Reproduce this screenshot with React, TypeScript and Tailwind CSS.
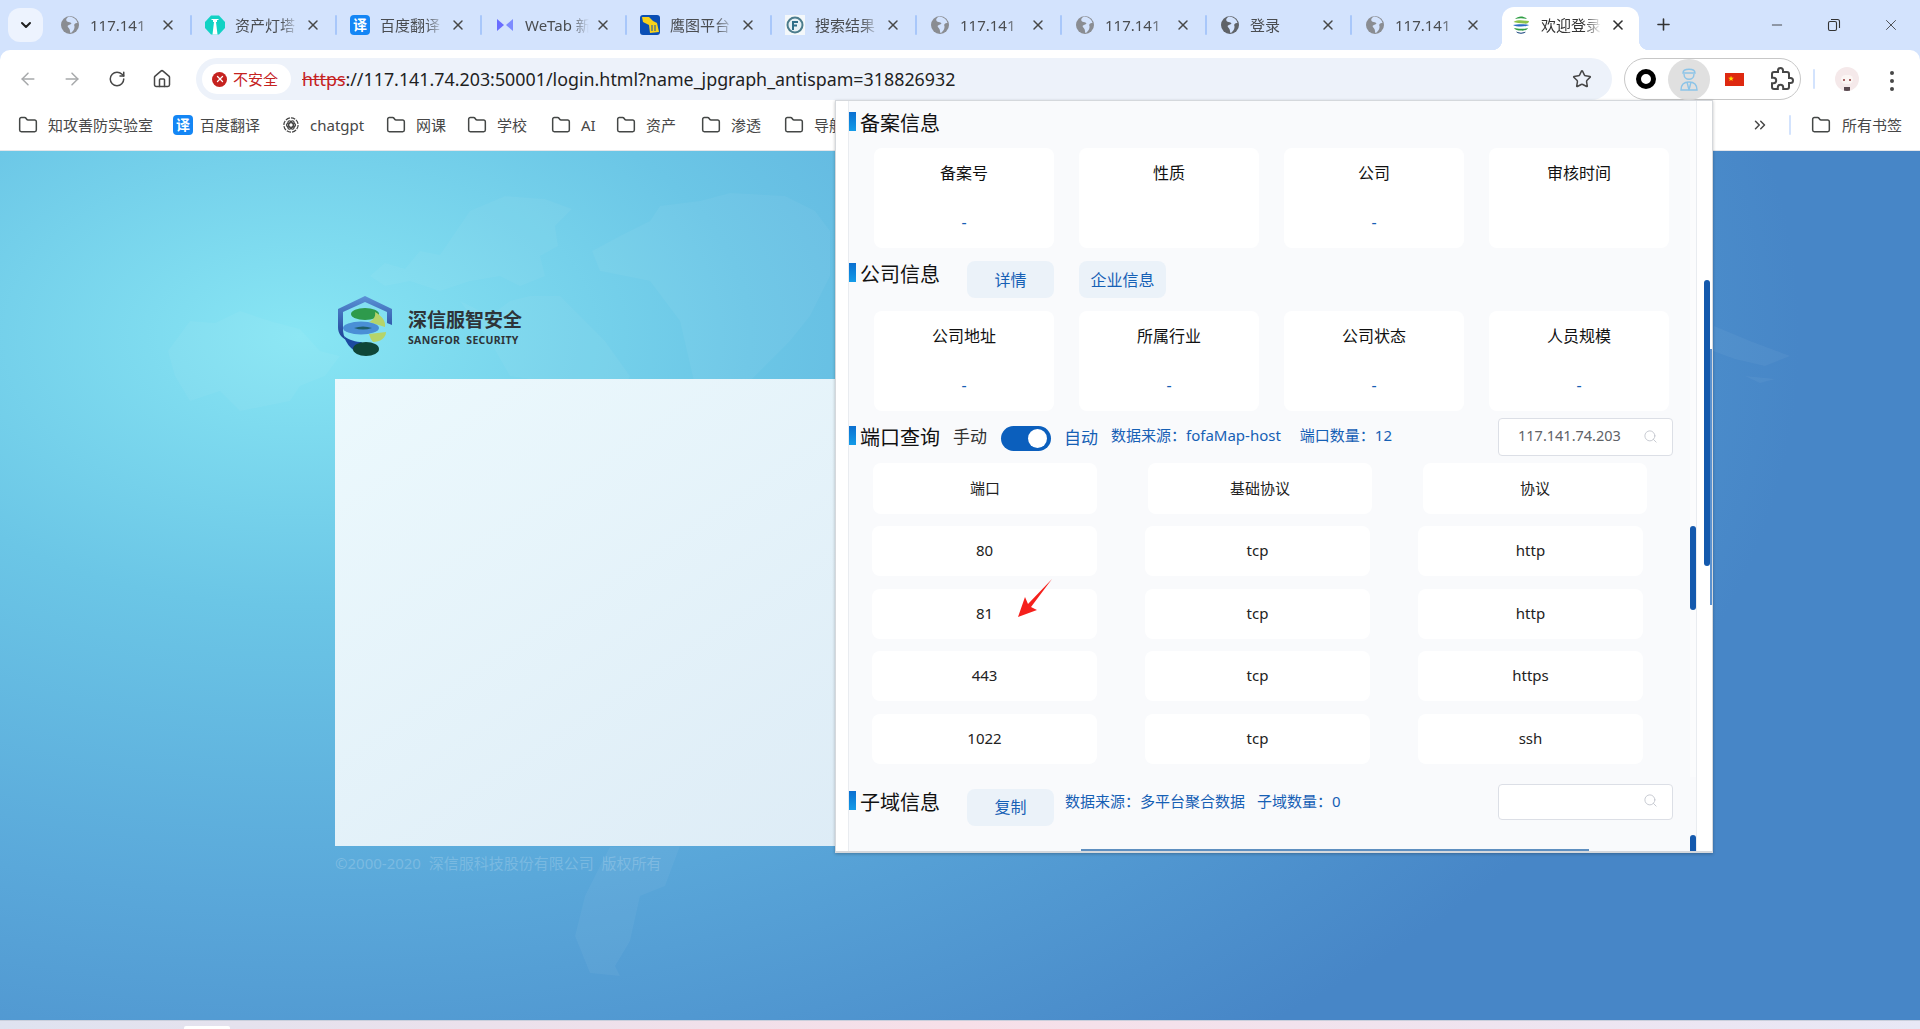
import React from "react";
import { ArrowLeft, ArrowRight, RotateCw, House, Star, Folder, X, Plus, Minus, Search, ChevronDown, ChevronsRight } from "lucide-react";

const GlobeIcon = ({ dark }: { dark?: boolean }) => (
  <svg width="20" height="20" viewBox="0 0 20 20">
    <circle cx="10" cy="10" r="9" fill={dark ? "#5f6368" : "#8a8d92"} />
    <path d="M9 1.5 C6 3 5.5 5 7 6.5 C9 7.5 11 7 11.5 8.5 C10.5 10 8.5 9.5 7.5 11 C8 13 10 13.5 10 16 C10 17.5 10.5 18 11 18 C13 16 15 14 14.5 11 C13.5 9.5 15 8 17.5 8 C17 5 14 2 9 1.5Z" fill="#d3e3fd" />
  </svg>
);
const TowerIcon = () => (
  <svg width="20" height="20" viewBox="0 0 20 20">
    <path d="M6 0.5 H14 L20 7 V13 L14 19.5 H6 L0 13 V7Z" fill="#12d2c4" />
    <path d="M8 5 H12 V7 H11 L12.5 19.5 H7.5 L9 7 H8Z M6.5 4 H13.5 V5 H6.5Z" fill="#ffffff" />
  </svg>
);
const TranslateIcon = ({ size = 20 }: { size?: number }) => (
  <span className="flex shrink-0 items-center justify-center rounded-[4px] bg-[#1486f5] text-[14px] leading-none font-bold text-white" style={{ width: size, height: size }}>译</span>
);
const WeTabIcon = () => (
  <svg width="20" height="20" viewBox="0 0 20 20">
    <path d="M2 4 L9 10 L2 16Z" fill="#6a6cff" />
    <path d="M18 4 L11 10 L18 16Z" fill="#7d8bff" />
  </svg>
);
const HunterIcon = () => (
  <svg width="20" height="20" viewBox="0 0 20 20">
    <rect width="20" height="20" rx="3" fill="#0a4fb5" />
    <path d="M2 2 H9 L13 6 L17 8 L19 17 L10 18 L9 10 L3 7Z" fill="#f7d21b" />
    <path d="M12 10 V16 M15 10 V16" stroke="#0a4fb5" strokeWidth="1" />
  </svg>
);
const FofaIcon = () => (
  <svg width="20" height="20" viewBox="0 0 20 20">
    <rect width="20" height="20" fill="#f4f8fa" />
    <circle cx="10" cy="10" r="7.5" fill="#e6f1f5" stroke="#4b7c8c" strokeWidth="2" />
    <path d="M8 15 V7 H13 M8 10.5 H12" fill="none" stroke="#2f6f88" strokeWidth="2" />
  </svg>
);
const SangforGlobe = ({ w }: { w: number }) => (
  <svg width={w} height={w} viewBox="0 0 20 20">
    <path d="M4 4 C7 0.5 13 0.5 16 4 C12 3 8 3 4 4Z" fill="#2f9e44" />
    <path d="M2.5 7 C8 4 13 6 18 6 C18 8 16 9 13 8.5 C9 8 5 8 2.5 7Z" fill="#8bc34a" />
    <path d="M2 10 C6 9 14 9 18 10 C15 12 5 12 2 10Z" fill="#2b6cc4" />
    <path d="M3 13 C7 14 13 14 17 13 C16 15 13 16 10 15.5 C7 15.5 4 15 3 13Z" fill="#2f9e44" />
    <path d="M5 16.5 C8 18 12 18 15 16.5 C13 19.5 7 19.5 5 16.5Z" fill="#123f7a" />
  </svg>
);
const SmallChatIcon = () => (
  <svg width="18" height="18" viewBox="0 0 24 24" fill="none" stroke="#444" strokeWidth="1.6">
    <circle cx="12" cy="12" r="9.5" strokeDasharray="6 1.4" />
    <ellipse cx="12" cy="12" rx="6" ry="3" />
    <ellipse cx="12" cy="12" rx="6" ry="3" transform="rotate(60 12 12)" />
    <ellipse cx="12" cy="12" rx="6" ry="3" transform="rotate(120 12 12)" />
  </svg>
);

type TabData = { title: string; icon: React.ReactNode };
const tabs: TabData[] = [
  { title: "117.141", icon: <GlobeIcon /> },
  { title: "资产灯塔", icon: <TowerIcon /> },
  { title: "百度翻译", icon: <TranslateIcon /> },
  { title: "WeTab 新", icon: <WeTabIcon /> },
  { title: "鹰图平台", icon: <HunterIcon /> },
  { title: "搜索结果", icon: <FofaIcon /> },
  { title: "117.141", icon: <GlobeIcon /> },
  { title: "117.141", icon: <GlobeIcon /> },
  { title: "登录", icon: <GlobeIcon dark /> },
  { title: "117.141", icon: <GlobeIcon /> },
];

const Tab = ({ tab, last }: { tab: TabData; last: boolean }) => (
  <div className="relative flex h-[50px] w-[145px] shrink-0 items-center pl-[13px]">
    <span className="flex h-5 w-5 shrink-0 items-center justify-center">{tab.icon}</span>
    <span className="ml-[10px] w-[64px] text-[15px] whitespace-nowrap text-[#4a4d51] [mask-image:linear-gradient(90deg,#000_72%,transparent_100%)]">{tab.title}</span>
    <X size={16} strokeWidth={2.2} className="ml-[6px] shrink-0 text-[#474747]" />
    {!last && <span className="absolute right-0 top-[15px] h-[20px] w-[2px] rounded bg-[#a8c7fa]" />}
  </div>
);

const FolderMark = ({ label, width }: { label: string; width: number }) => (
  <div className="flex shrink-0 items-center" style={{ width }}>
    <Folder size={20} strokeWidth={1.8} className="shrink-0 text-[#444746]" />
    <span className="ml-[10px] text-[15px] whitespace-nowrap text-[#474747]">{label}</span>
  </div>
);

const Card = ({ label, value }: { label: string; value?: string }) => (
  <div className="flex h-[100px] w-[180px] flex-col items-center rounded-[8px] bg-white pt-[13px]">
    <span className="h-[24px] text-[16px] leading-[24px] text-[#111]">{label}</span>
    <span className="mt-[25px] h-[24px] text-[16px] leading-[24px] text-[#1660b5]">{value ?? ""}</span>
  </div>
);

const SectionTitle = ({ text }: { text: string }) => (
  <div className="flex shrink-0 items-start">
    <span className="h-[19px] w-[7px] bg-gradient-to-b from-[#0c6fd0] to-[#149be8]" />
    <span className="ml-[4px] -mt-[1px] text-[20px] leading-[26px] whitespace-nowrap text-[#111]">{text}</span>
  </div>
);

const SoftButton = ({ text }: { text: string }) => (
  <div className="flex h-[37px] w-[87px] items-center justify-center rounded-[8px] bg-[#ebf2f9] text-[16px] text-[#1660b5]">{text}</div>
);

const SearchBox = ({ value, tall }: { value?: string; tall?: boolean }) => (
  <div className={`absolute left-[649px] flex w-[175px] items-center justify-between rounded-[4px] border border-[#dcdfe6] bg-white pb-[2px] pl-[19px] pr-[14px] text-[14.5px] text-[#606266] ${tall ? "top-[7px] h-[38px]" : "top-[20px] h-[36px]"}`}>
    <span>{value ?? ""}</span>
    <Search size={15} strokeWidth={1.4} className="text-[#c0c4cc]" />
  </div>
);

const ports = [
  ["80", "tcp", "http"],
  ["81", "tcp", "http"],
  ["443", "tcp", "https"],
  ["1022", "tcp", "ssh"],
];

export default function App() {
  return (
    <div className="relative flex h-[1029px] w-[1920px] flex-col overflow-hidden bg-[#d3e3fd] font-['Noto_Sans','Noto_Sans_CJK_SC',sans-serif]">
      {/* Tab strip */}
      <div className="flex h-[50px] shrink-0 items-center pl-[8px]">
        <div className="flex h-[34px] w-[35px] shrink-0 items-center justify-center rounded-[12px] bg-[#edf3fe]">
          <ChevronDown size={16} strokeWidth={3} className="text-[#1f1f1f]" />
        </div>
        <div className="ml-[4px] flex">
          {tabs.map((t, i) => (
            <Tab key={i} tab={t} last={i === tabs.length - 1} />
          ))}
          <div className="relative ml-[5px] mt-[7px] flex h-[43px] w-[137px] shrink-0 items-center rounded-t-[12px] bg-white pb-[7px] pl-[9px]">
            <span className="absolute -left-[10px] bottom-0 h-[10px] w-[10px] bg-[radial-gradient(circle_at_0_0,transparent_10px,white_10.5px)]" />
            <span className="absolute -right-[10px] bottom-0 h-[10px] w-[10px] bg-[radial-gradient(circle_at_100%_0,transparent_10px,white_10.5px)]" />
            <SangforGlobe w={20} />
            <span className="ml-[10px] w-[60px] text-[15px] whitespace-nowrap text-[#333] [mask-image:linear-gradient(90deg,#000_72%,transparent_100%)]">欢迎登录</span>
            <X size={16} strokeWidth={2.4} className="ml-[9px] shrink-0 text-[#303030]" />
          </div>
          <Plus size={19} strokeWidth={2} className="ml-[15px] mt-[15px] shrink-0 text-[#333]" />
        </div>
        <div className="ml-auto flex items-center pr-[20px]">
          <Minus size={16} strokeWidth={1.3} className="text-[#333]" />
          <svg width="14" height="14" viewBox="0 0 14 14" fill="none" stroke="#333" strokeWidth="1.1" className="ml-[42px]">
            <rect x="1.5" y="3.5" width="8" height="9" rx="1.5" />
            <path d="M4 1.5 H10.5 A2 2 0 0 1 12.5 3.5 V10" />
          </svg>
          <X size={18} strokeWidth={1.1} className="ml-[41px] text-[#333]" />
        </div>
      </div>

      {/* Toolbar */}
      <div className="flex h-[50px] shrink-0 items-start rounded-t-[10px] bg-white pt-[8px]">
        <div className="flex h-[42px] items-center pl-[18px]">
          <ArrowLeft size={20} strokeWidth={1.8} className="text-[#a7a9ab]" />
          <ArrowRight size={20} strokeWidth={1.8} className="ml-[24px] text-[#a7a9ab]" />
          <RotateCw size={18} strokeWidth={2} className="ml-[26px] text-[#474747]" />
          <House size={20} strokeWidth={1.8} className="ml-[26px] text-[#474747]" />
        </div>
        <div className="ml-[24px] flex h-[42px] w-[1416px] items-center rounded-full bg-[#edf2fa] pl-[6px] pr-[20px]">
          <div className="flex h-[30px] w-[89px] items-center rounded-full bg-white pl-[10px]">
            <span className="flex h-[15px] w-[15px] items-center justify-center rounded-full bg-[#c5221f]">
              <X size={10} strokeWidth={3} className="text-white" />
            </span>
            <span className="ml-[6px] text-[15px] whitespace-nowrap text-[#c5221f]">不安全</span>
          </div>
          <span className="ml-[11px] text-[17.85px] whitespace-nowrap text-[#1f1f1f]">
            <span className="text-[#c5221f] line-through">https</span>://117.141.74.203:50001/login.html?name_jpgraph_antispam=318826932
          </span>
          <Star size={20} strokeWidth={1.8} className="ml-auto text-[#474747]" />
        </div>
        <div className="ml-[12px] flex h-[42px] w-[177px] items-center rounded-full border border-[#c7c7c7]">
          <span className="ml-[11px] h-[20px] w-[20px] rounded-full border-[5px] border-black" />
          <span className="ml-[12px] flex h-[41px] w-[42px] items-center justify-center rounded-full bg-[#e0e0e0]">
            <svg width="20" height="26" viewBox="0 0 20 26" fill="none" stroke="#8cc4e8" strokeWidth="1.4">
              <path d="M4 7 C4 2 16 2 16 7 Z" />
              <path d="M5 8 C5 15 15 15 15 8" />
              <path d="M2 24 C2 18 6 16 10 16 C14 16 18 18 18 24 Z" />
              <path d="M8 16 L10 24 L12 16" />
            </svg>
          </span>
          <span className="relative ml-[15px] flex h-[13px] w-[19px] bg-[#de2910]">
            <span className="absolute left-[3px] top-[1px] text-[6px] leading-[8px] text-[#ffde00]">★</span>
          </span>
          <svg width="24" height="24" viewBox="0 0 24 24" fill="none" stroke="#474747" strokeWidth="2" className="ml-[26px]">
            <path d="M20.5 11H19V7c0-1.1-.9-2-2-2h-4V3.5C13 2.12 11.88 1 10.5 1S8 2.12 8 3.5V5H4c-1.1 0-1.99.9-1.99 2v3.8H3.5c1.49 0 2.7 1.21 2.7 2.7s-1.21 2.7-2.7 2.7H2V20c0 1.1.9 2 2 2h3.8v-1.5c0-1.49 1.21-2.7 2.7-2.7 1.49 0 2.7 1.21 2.7 2.7V22H17c1.1 0 2-.9 2-2v-4h1.5c1.38 0 2.5-1.12 2.5-2.5S21.88 11 20.5 11z" />
          </svg>
        </div>
        <span className="ml-[12px] mt-[11px] h-[20px] w-[2px] rounded bg-[#d3e3fd]" />
        <span className="relative ml-[20px] mt-[9px] flex h-[24px] w-[24px] items-center justify-center overflow-hidden rounded-full bg-[#f5e9ea]">
          <span className="absolute left-[6px] top-[8px] h-[9px] w-[12px] rounded-full bg-[#fbf6f4]" />
          <span className="absolute left-[8px] top-[12px] h-[2px] w-[2px] bg-[#a66]" />
          <span className="absolute left-[14px] top-[12px] h-[2px] w-[2px] bg-[#a66]" />
          <span className="absolute bottom-0 left-[9px] h-[4px] w-[6px] bg-[#5a4a50]" />
        </span>
        <span className="ml-[31px] mt-[13px] flex flex-col gap-[4px]">
          <span className="h-[4px] w-[4px] rounded-full bg-[#474747]" />
          <span className="h-[4px] w-[4px] rounded-full bg-[#474747]" />
          <span className="h-[4px] w-[4px] rounded-full bg-[#474747]" />
        </span>
      </div>

      {/* Bookmarks */}
      <div className="flex h-[51px] shrink-0 items-center border-b border-[#e4e6ea] bg-white pl-[18px]">
        <FolderMark label="知攻善防实验室" width={155} />
        <div className="flex w-[109px] shrink-0 items-center">
          <TranslateIcon />
          <span className="ml-[7px] text-[15px] whitespace-nowrap text-[#474747]">百度翻译</span>
        </div>
        <div className="flex w-[104px] shrink-0 items-center">
          <SmallChatIcon />
          <span className="ml-[10px] text-[15px] whitespace-nowrap text-[#474747]">chatgpt</span>
        </div>
        <FolderMark label="网课" width={81} />
        <FolderMark label="学校" width={84} />
        <FolderMark label="AI" width={65} />
        <FolderMark label="资产" width={85} />
        <FolderMark label="渗透" width={83} />
        <FolderMark label="导航" width={80} />
        <div className="ml-auto flex items-center pr-[18px]">
          <ChevronsRight size={18} strokeWidth={2} className="text-[#474747]" />
          <span className="ml-[20px] h-[20px] w-[2px] rounded bg-[#d3e3fd]" />
          <Folder size={20} strokeWidth={1.8} className="ml-[20px] text-[#444746]" />
          <span className="ml-[11px] text-[15px] text-[#474747]">所有书签</span>
        </div>
      </div>

      {/* Page */}
      <div className="relative min-h-0 flex-1 overflow-hidden bg-[radial-gradient(ellipse_1500px_900px_at_300px_185px,#88e6f4_0%,#6bc6e6_30%,#5aa8da_62%,#4786c7_100%)] pl-[335px] pt-[144px]">
        <svg width="1920" height="869" viewBox="0 0 1920 869" className="absolute left-0 top-0" fill="#ffffff" fillOpacity="0.045">
          <path d="M168 200 L190 170 L215 172 L240 160 L270 170 L300 178 L320 200 L340 205 L325 225 L300 235 L290 250 L240 260 L220 240 L190 250 L175 225 Z" />
          <path d="M370 125 L385 112 L405 118 L420 100 L440 104 L470 60 L505 45 L545 48 L572 58 L555 75 L558 95 L540 105 L545 125 L520 135 L500 125 L470 130 L440 140 L410 130 L385 135 Z" />
          <path d="M460 150 L490 165 L510 150 L530 145 L560 145 L585 170 L605 190 L630 225 L620 250 L600 235 L575 260 L545 230 L510 225 L490 190 Z" />
          <path d="M592 100 L620 85 L650 70 L660 55 L700 50 L730 42 L785 45 L815 60 L830 80 L830 125 L810 165 L790 190 L745 235 L695 235 L680 170 L650 130 L625 125 L600 120 Z" />
          <path d="M610 696 L680 695 L665 735 L640 745 L630 790 L615 815 L620 825 L590 822 L575 785 L585 745 L600 715 Z" />
          <path d="M1714 175 L1750 190 L1790 205 L1765 215 L1735 208 L1713 200 Z" />
          <path d="M1745 225 L1775 228 L1760 232 Z" />
        </svg>

        <div className="relative flex h-[62px] items-center">
          <svg width="60" height="62" viewBox="0 0 58 62">
            <defs>
              <linearGradient id="shield" x1="0" y1="0" x2="0" y2="1">
                <stop offset="0" stopColor="#5b92d6" />
                <stop offset="1" stopColor="#1c3f96" />
              </linearGradient>
            </defs>
            <path d="M2 14 L29 1 L56 14 V30 L51 28 V17 L29 7 L7 17 V34 C7 38 8 42 10 45 C5 42 2 38 2 32Z" fill="url(#shield)" />
            <ellipse cx="29" cy="19" rx="14" ry="6" fill="#2e9a4c" />
            <path d="M39 17 C46 21 50 26 49 32 L33 27 C37 25 40 22 39 17Z" fill="#b5d46a" />
            <ellipse cx="25" cy="33" rx="18" ry="6.5" fill="#4a8fd6" />
            <path d="M18 33 C24 31 30 31 36 33 C30 35 24 35 18 33Z" fill="#1f5f6a" />
            <path d="M33 39 L50 37 C50 43 44 47 37 47 C35 45 34 42 33 39Z" fill="#b5d46a" />
            <path d="M8 41 C13 45 20 47 26 47 L20 57 C14 53 10 48 8 41Z" fill="#1c4aa0" />
            <ellipse cx="30" cy="54" rx="13" ry="7" fill="#0f4638" />
          </svg>
          <div className="ml-[13px] flex flex-col pt-[2px]">
            <span className="text-[19px] leading-[24px] font-bold text-[#2e3438]">深信服智安全</span>
            <span className="mt-[1px] text-[10.5px] leading-[14px] font-bold tracking-[0.3px] whitespace-pre text-[#2e3438]">SANGFOR  SECURITY</span>
          </div>
        </div>
        <div className="relative mt-[22px] h-[467px] w-[700px] bg-gradient-to-br from-[#ecf9fd] to-[#dbeaf5]" />
        <div className="relative mt-[6px] text-[15px] leading-[22px] text-[#ffffff]/20">©2000-2020&nbsp; 深信服科技股份有限公司&nbsp; 版权所有</div>
      </div>

      {/* Bottom strip */}
      <div className="relative h-[9px] shrink-0 border-t border-[#c9cfdc] bg-gradient-to-r from-[#dfe3f0] via-[#f7dfe8] to-[#e8e8f6]">
        <span className="absolute bottom-0 left-[184px] h-[3px] w-[46px] rounded-t-[2px] bg-white" />
      </div>

      {/* Popup panel */}
      <div className="absolute left-[835px] top-[100px] flex h-[753px] w-[878px] border-x border-t border-b-2 border-[#d5d8dc] bg-white shadow-[0_1px_3px_rgba(0,0,0,0.25)]">
        <div className="w-[13px] shrink-0 border-r border-[#e9ecf0] bg-white" />
        <div className="relative h-full w-[848px] shrink-0 overflow-hidden border-r border-[#e9ecf0] bg-[#f9fafc]">
          <div className="flex h-[47px] pt-[11px]">
            <SectionTitle text="备案信息" />
          </div>
          <div className="ml-[25px] flex gap-[25px]">
            <Card label="备案号" value="-" />
            <Card label="性质" />
            <Card label="公司" value="-" />
            <Card label="审核时间" />
          </div>

          <div className="flex h-[63px] items-start">
            <div className="mt-[15px]"><SectionTitle text="公司信息" /></div>
            <div className="ml-[27px] mt-[13px] flex gap-[25px]">
              <SoftButton text="详情" />
              <SoftButton text="企业信息" />
            </div>
          </div>
          <div className="ml-[25px] flex gap-[25px]">
            <Card label="公司地址" value="-" />
            <Card label="所属行业" value="-" />
            <Card label="公司状态" value="-" />
            <Card label="人员规模" value="-" />
          </div>

          <div className="relative flex h-[52px] items-start">
            <div className="mt-[15px]"><SectionTitle text="端口查询" /></div>
            <span className="ml-[13px] mt-[14px] text-[17px] leading-[24px] text-[#333]">手动</span>
            <span className="ml-[14px] mt-[15px] flex h-[25px] w-[50px] items-center justify-end rounded-full bg-[#0b5fbd] pr-[4px]">
              <span className="h-[19px] w-[19px] rounded-full bg-white" />
            </span>
            <span className="ml-[13px] mt-[15px] text-[17px] leading-[24px] text-[#1660b5]">自动</span>
            <span className="ml-[13px] mt-[12px] text-[15px] leading-[24px] text-[#1660b5]">数据来源：fofaMap-host</span>
            <span className="ml-[19px] mt-[12px] text-[15px] leading-[24px] text-[#1660b5]">端口数量：12</span>
            <SearchBox value="117.141.74.203" tall />
          </div>

          <div className="ml-[24px] grid w-[775px] grid-cols-[224px_224px_224px] gap-x-[51px]">
            {["端口", "基础协议", "协议"].map((h) => (
              <div key={h} className="flex h-[51px] items-center justify-center rounded-[8px] bg-white text-[15px] text-[#222]">{h}</div>
            ))}
          </div>
          <div className="ml-[23px] mt-[12px] flex w-[770px] flex-col gap-[12.5px]">
            {ports.map((row) => (
              <div key={row[0]} className="grid grid-cols-[225px_225px_225px] gap-x-[48px]">
                {row.map((c, i) => (
                  <div key={i} className="flex h-[50px] items-center justify-center rounded-[8px] bg-white pb-[1px] text-[15px] text-[#222]">{c}</div>
                ))}
              </div>
            ))}
          </div>

          <div className="relative flex h-[70px] items-start">
            <div className="mt-[27px]"><SectionTitle text="子域信息" /></div>
            <div className="ml-[27px] mt-[25px]"><SoftButton text="复制" /></div>
            <span className="ml-[11px] mt-[25px] text-[15px] leading-[24px] text-[#1660b5]">数据来源：多平台聚合数据</span>
            <span className="ml-[12px] mt-[25px] text-[15px] leading-[24px] text-[#1660b5]">子域数量：0</span>
            <SearchBox />
          </div>

          {/* inner scrollbar */}
          <span className="absolute right-0 top-0 h-[676px] w-[6px] bg-[#fbfcfd]" />
          <span className="absolute right-0 top-[425px] h-[84px] w-[6px] rounded-full bg-[#1459ad]" />
          <span className="absolute right-0 top-[734px] h-[20px] w-[6px] rounded-t-full bg-[#1459ad]" />
          {/* horizontal scrollbar */}
          <span className="absolute bottom-0 left-[232px] h-[2px] w-[508px] bg-[#5f8fc0]" />
        </div>
        {/* outer scrollbar */}
        <div className="relative flex-1">
          <span className="absolute left-[7px] top-[179px] h-[286px] w-[6px] rounded-full bg-[#1459ad]" />
          <span className="absolute right-0 top-[248px] h-[256px] w-[2px] bg-[#5b92d0]" />
        </div>
      </div>

      {/* Red annotation arrow */}
      <svg width="40" height="44" viewBox="0 0 40 44" className="absolute left-[1016px] top-[577px]">
        <path d="M36 2 L15 30 L21 33 L2 40 L9 20 L12 27 Z" fill="#f5201c" />
      </svg>
    </div>
  );
}
